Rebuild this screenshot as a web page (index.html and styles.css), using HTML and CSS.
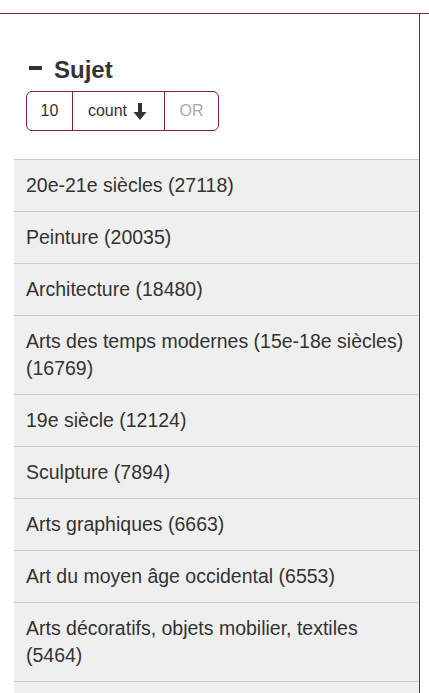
FILE: index.html
```html
<!DOCTYPE html>
<html lang="fr">
<head>
<meta charset="utf-8">
<link rel="stylesheet" href="styles.css">
</head>
<body>
<div class="frame">
  <aside class="panel">
    <div class="facet-head">
      <h2 class="facet-title"><span class="minus"></span>Sujet</h2>
      <div class="btn-group">
        <span class="btn btn-limit">10</span>
        <span class="btn btn-sort">count
          <svg class="arrow" viewBox="0 0 14 18" width="14" height="18"><path d="M5 0h4v9h4.5L7 17 0.5 9H5z" fill="#333"/></svg>
        </span>
        <span class="btn btn-op">OR</span>
      </div>
    </div>
    <ul class="facet-list">
      <li>20e-21e siècles (27118)</li>
      <li>Peinture (20035)</li>
      <li>Architecture (18480)</li>
      <li>Arts des temps modernes (15e-18e siècles) (16769)</li>
      <li>19e siècle (12124)</li>
      <li>Sculpture (7894)</li>
      <li>Arts graphiques (6663)</li>
      <li>Art du moyen âge occidental (6553)</li>
      <li>Arts décoratifs, objets mobilier, textiles (5464)</li>
      <li class="more"></li>
    </ul>
  </aside>
</div>
</body>
</html>
```
FILE: styles.css
```css
html, body {
  margin: 0;
  padding: 0;
  background: #fff;
}
body {
  font-family: "Liberation Sans", Arial, sans-serif;
  color: #333;
  overflow: hidden;
  height: 693px;
}
.frame {
  margin-top: 13px;
  border-top: 1px solid #8c1d40;
}
.panel {
  width: 405px;
  padding-left: 14px;
  border-right: 1px solid #8c1d40;
  min-height: 700px;
}
.facet-head {
  padding: 42px 12px 28px;
}
.facet-title {
  margin: 0 0 7px;
  font-size: 24px;
  font-weight: bold;
  line-height: 28px;
  display: flex;
  align-items: center;
}
.minus {
  display: inline-block;
  width: 13px;
  height: 4px;
  background: #333;
  margin: 0 12px 4px 3px;
}
.btn-group {
  display: inline-flex;
  height: 38px;
  border: 1px solid #8c1d40;
  border-radius: 6px;
  font-size: 16px;
}
.btn {
  display: flex;
  align-items: center;
  justify-content: center;
  border-left: 1px solid #8c1d40;
}
.btn:first-child {
  border-left: none;
}
.btn-limit {
  width: 45px;
}
.btn-sort {
  width: 92px;
  gap: 6px;
  padding-right: 2px;
  box-sizing: border-box;
}
.btn-op {
  width: 53px;
  color: #aaa;
}
.arrow {
  display: block;
  margin-top: 1px;
}
.facet-list {
  list-style: none;
  margin: 0;
  padding: 0;
  border-top: 1px solid #ccc;
}
.facet-list li {
  background: #efefef;
  border-bottom: 1px solid #ccc;
  padding: 12px 12px;
  font-size: 19.5px;
  line-height: 27px;
}
.facet-list li.more {
  min-height: 27px;
}
```
